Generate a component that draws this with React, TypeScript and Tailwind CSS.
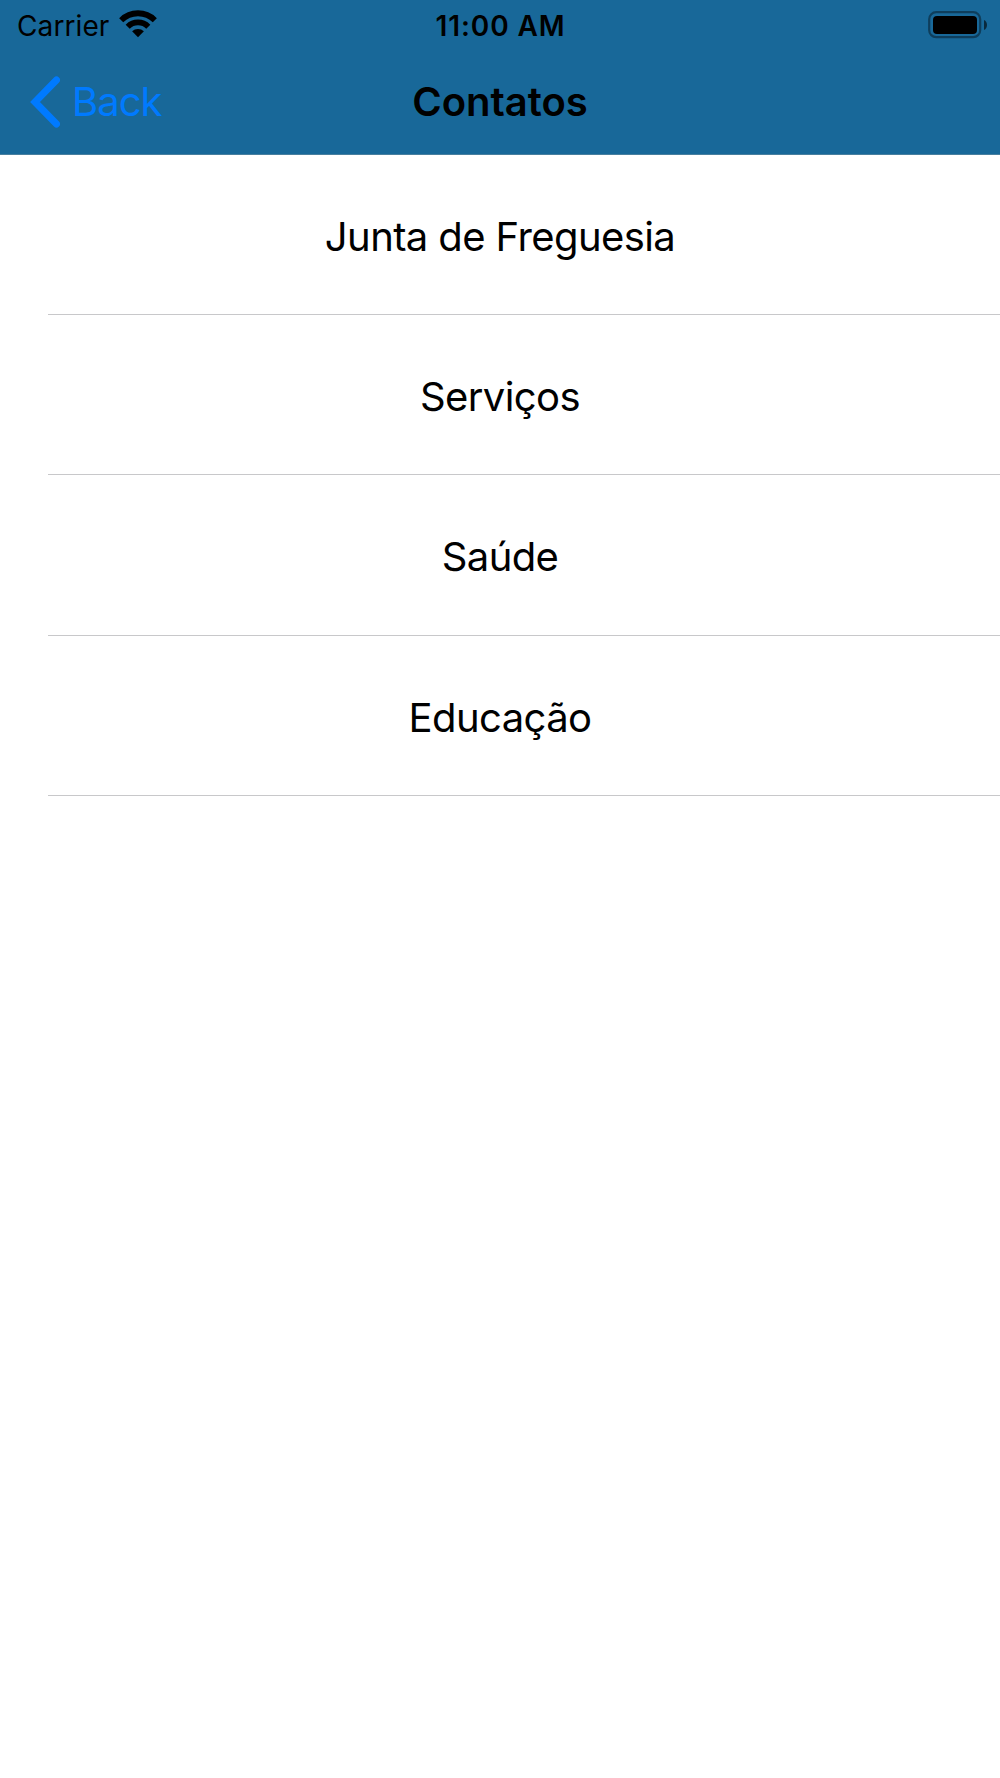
const contacts = ["Junta de Freguesia", "Serviços", "Saúde", "Educação"];

function WifiIcon() {
  return (
    <svg className="-mt-[3px] h-[28px] w-[38px]" viewBox="0 0 38 28" fill="none" stroke="black" strokeWidth="5.8">
      <path d="M2.200 10.200a23.800 23.800 0 0 1 33.600 0" />
      <path d="M8.700 16.700a14.600 14.600 0 0 1 20.600 0" />
      <path d="M19 27.200l-5.900-5.900a8.400 8.400 0 0 1 11.800 0z" fill="black" stroke="none" />
    </svg>
  );
}

function BatteryIcon() {
  return (
    <svg className="-mt-px h-[28px] w-[60px]" viewBox="0 0 60 28">
      <rect x="1.2" y="1.2" width="51" height="25" rx="7" fill="none" stroke="black" strokeOpacity="0.4" strokeWidth="2.2" />
      <rect x="5" y="5" width="44" height="18" rx="4" fill="black" />
      <path d="M56 9c4 1.5 4 8.5 0 10z" fill="black" fillOpacity="0.6" />
    </svg>
  );
}

export default function App() {
  return (
    <div className="min-h-[1778px] w-full bg-white font-['Inter',sans-serif] text-black">
      <header className="h-[155px] border-b border-[#487f9f] bg-[#186899]">
        <div className="grid h-[51px] grid-cols-3 items-center px-3">
          <div className="flex items-center gap-[10px] pl-[5px]">
            <span className="text-[28px] tracking-[0.1px]">Carrier</span>
            <WifiIcon />
          </div>
          <span className="pl-px text-center text-[28px] font-semibold tracking-[0.9px]">11:00 AM</span>
          <div className="flex justify-end"><BatteryIcon /></div>
        </div>
        <nav className="grid h-[102px] grid-cols-3 items-center px-[30px]">
          <button className="flex items-center gap-3 text-[40px] tracking-[-1px] text-[#007aff]">
            <svg className="h-[52px] w-[30px]" viewBox="0.5 0 30 52" fill="none" stroke="currentColor" strokeWidth="7" strokeLinecap="round">
              <path d="M27 4L5.5 26 27 48" />
            </svg>
            Back
          </button>
          <h1 className="text-center text-[40px] font-semibold">Contatos</h1>
        </nav>
      </header>
      <ul>
        {contacts.map((name) => (
          <li key={name} className="flex h-[160.2px] flex-col">
            <span className="flex flex-1 items-center justify-center pt-[5px] text-[40px] tracking-[-0.6px]">{name}</span>
            <div className="ml-[48px] h-px bg-[#c8c8ca]" />
          </li>
        ))}
      </ul>
    </div>
  );
}
